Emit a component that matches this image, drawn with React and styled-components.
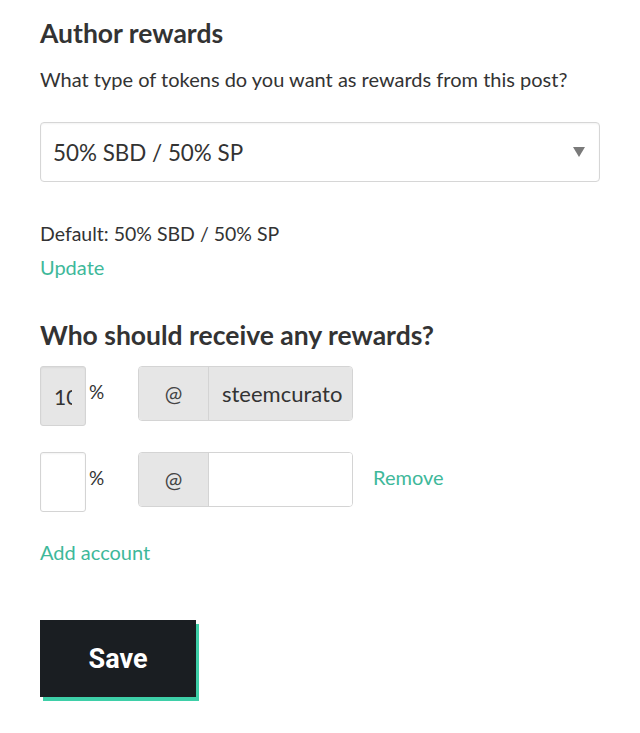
import React from "react";
import styled, { createGlobalStyle } from "styled-components";

const GlobalStyle = createGlobalStyle`
  html, body {
    margin: 0;
    padding: 0;
    background: #ffffff;
  }
  body {
    font-family: Lato, "Open Sans", sans-serif;
    color: #333333;
  }
  * {
    box-sizing: border-box;
  }
`;

const Page = styled.div`
  width: 640px;
  height: 733px;
  padding: 16px 40px 0 40px;
  display: flex;
  flex-direction: column;
`;

const Heading = styled.h3`
  margin: 0;
  margin-top: ${(p) => p.$top || 0}px;
  font-size: 26.5px;
  font-weight: 700;
  line-height: 34px;
  color: #333333;
`;

const Text = styled.p`
  margin: 0;
  margin-top: ${(p) => p.$top || 0}px;
  font-size: ${(p) => p.$size || 20}px;
  line-height: 26px;
  color: #333333;
`;

const LinkRow = styled.div`
  display: flex;
  margin-top: ${(p) => p.$top || 0}px;
`;

const Link = styled.a`
  font-size: 20px;
  line-height: 26px;
  color: #3eb89a;
  text-decoration: none;
  cursor: pointer;
`;

const SelectBox = styled.div`
  margin-top: 30px;
  height: 60px;
  width: 560px;
  border: 1px solid #d6d6d6;
  border-radius: 4px;
  padding: 0 14px 0 12px;
  display: flex;
  align-items: center;
  justify-content: space-between;
  font-size: 22.4px;
  color: #333333;
  box-shadow: inset 0 1px 2px rgba(0, 0, 0, 0.05);
`;

const Arrow = styled.span`
  width: 0;
  height: 0;
  border-left: 6px solid transparent;
  border-right: 6px solid transparent;
  border-top: 10px solid #7a7a7a;
`;

const Row = styled.div`
  display: flex;
  align-items: flex-start;
  margin-top: ${(p) => p.$top}px;
`;

const PercentInput = styled.div`
  width: 46px;
  height: 60px;
  border: 1px solid #d4d4d4;
  border-radius: 3px;
  background: ${(p) => (p.$disabled ? "#e6e6e6" : "#ffffff")};
  display: flex;
  align-items: center;
  padding: 0 13px 0 13px;
  font-size: 21px;
  color: #333333;
  box-shadow: inset 0 1px 2px rgba(0, 0, 0, 0.05);
`;

const Clip = styled.span`
  display: block;
  width: 100%;
  overflow: hidden;
  white-space: nowrap;
`;

const Percent = styled.span`
  width: 52px;
  padding: 15px 0 0 3px;
  font-size: 19px;
  line-height: 22px;
  color: #333333;
`;

const AccountGroup = styled.div`
  display: flex;
  width: 215px;
  height: 55px;
  border: 1px solid #d4d4d4;
  border-radius: 4px;
  overflow: hidden;
`;

const AtAddon = styled.div`
  width: 70px;
  flex: none;
  background: #e6e6e6;
  border-right: 1px solid #d4d4d4;
  display: flex;
  align-items: center;
  justify-content: center;
  font-size: 21px;
  color: #444444;
`;

const AccountInput = styled.div`
  flex: 1;
  min-width: 0;
  background: ${(p) => (p.$disabled ? "#e6e6e6" : "#ffffff")};
  display: flex;
  align-items: center;
  padding: 0 9px 0 13px;
  font-size: 22px;
  color: #333333;
`;

const RemoveLink = styled(Link)`
  margin: 12px 0 0 20px;
`;

const SaveButton = styled.button`
  margin-top: 55px;
  width: 156px;
  height: 77px;
  border: none;
  background: #1a1e22;
  color: #ffffff;
  font-family: Roboto, Inter, sans-serif;
  font-weight: 700;
  font-size: 27px;
  box-shadow: 3px 4px 0 #3ecfa8;
  cursor: pointer;
`;

const ButtonRow = styled.div`
  display: flex;
`;

export default function App() {
  return (
    <>
      <GlobalStyle />
      <Page>
        <Heading>Author rewards</Heading>
        <Text $top={16}>
          What type of tokens do you want as rewards from this post?
        </Text>
        <SelectBox>
          <span>50% SBD / 50% SP</span>
          <Arrow />
        </SelectBox>
        <Text $top={39} $size={19.5}>
          Default: 50% SBD / 50% SP
        </Text>
        <LinkRow $top={7}>
          <Link>Update</Link>
        </LinkRow>
        <Heading $top={38}>Who should receive any rewards?</Heading>
        <Row $top={14}>
          <PercentInput $disabled>
            <Clip>100</Clip>
          </PercentInput>
          <Percent>%</Percent>
          <AccountGroup>
            <AtAddon>@</AtAddon>
            <AccountInput $disabled>
              <Clip>steemcurator01</Clip>
            </AccountInput>
          </AccountGroup>
        </Row>
        <Row $top={26}>
          <PercentInput>
            <Clip />
          </PercentInput>
          <Percent>%</Percent>
          <AccountGroup>
            <AtAddon>@</AtAddon>
            <AccountInput />
          </AccountGroup>
          <RemoveLink>Remove</RemoveLink>
        </Row>
        <LinkRow $top={27}>
          <Link>Add account</Link>
        </LinkRow>
        <ButtonRow>
          <SaveButton>Save</SaveButton>
        </ButtonRow>
      </Page>
    </>
  );
}
